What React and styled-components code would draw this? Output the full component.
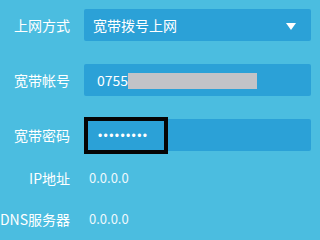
import React from "react";
import styled, { createGlobalStyle } from "styled-components";

const Global = createGlobalStyle`
  html, body { margin: 0; padding: 0; }
  body {
    background: #4bbde0;
    width: 319px;
    height: 231px;
    overflow: hidden;
    font-family: "Noto Sans CJK SC", "Noto Sans", sans-serif;
  }
`;

const Form = styled.div`
  display: flex;
  flex-direction: column;
  padding-top: 9px;
`;

const Row = styled.div`
  display: grid;
  grid-template-columns: 70px 227px;
  column-gap: 14px;
  align-items: center;
  height: ${(p) => p.$h}px;
  margin-top: ${(p) => p.$mt || 0}px;
`;

const Label = styled.div`
  display: flex;
  justify-content: flex-end;
  white-space: nowrap;
  color: #ffffff;
  font-size: 14px;
  line-height: 20px;
`;

const Field = styled.div`
  position: relative;
  display: flex;
  align-items: flex-start;
  height: 32px;
  background: #2ba1d7;
  border-radius: 2px;
  color: #ffffff;
  font-size: 14px;
  line-height: 32px;
  padding-left: ${(p) => p.$pl || 0}px;
  box-sizing: border-box;
`;

const SelectText = styled.span`
  flex: 1;
`;

const Arrow = styled.span`
  width: 0;
  height: 0;
  margin: 14px 15px 0 0;
  border-left: 5px solid transparent;
  border-right: 5px solid transparent;
  border-top: 7px solid #ffffff;
`;

const Masked = styled.span`
  display: inline-block;
  width: 129px;
  height: 16px;
  margin-top: 9px;
  background: #c2c3c7;
`;

const Focused = styled.div`
  box-sizing: border-box;
  width: 84px;
  height: 37px;
  margin-top: -2px;
  border: 4px solid #050505;
  background: #2ba1d7;
  display: flex;
  align-items: center;
  padding-left: 10px;
  font-family: "Liberation Sans", sans-serif;
  font-size: 12px;
  letter-spacing: 1.4px;
  line-height: 1;
  color: #ffffff;
`;

const Value = styled.div`
  color: #eef8fc;
  font-size: 13px;
  line-height: 20px;
  padding-left: 5px;
`;

export default function App() {
  return (
    <>
      <Global />
      <Form>
        <Row $h={32}>
          <Label>上网方式</Label>
          <Field $pl={9}>
            <SelectText>宽带拨号上网</SelectText>
            <Arrow />
          </Field>
        </Row>
        <Row $h={32} $mt={23}>
          <Label>宽带帐号</Label>
          <Field $pl={13}>
            0755
            <Masked />
          </Field>
        </Row>
        <Row $h={32} $mt={23}>
          <Label>宽带密码</Label>
          <Field>
            <Focused>•••••••••</Focused>
          </Field>
        </Row>
        <Row $h={20} $mt={17}>
          <Label>IP地址</Label>
          <Value>0.0.0.0</Value>
        </Row>
        <Row $h={20} $mt={21}>
          <Label>DNS服务器</Label>
          <Value>0.0.0.0</Value>
        </Row>
      </Form>
    </>
  );
}
